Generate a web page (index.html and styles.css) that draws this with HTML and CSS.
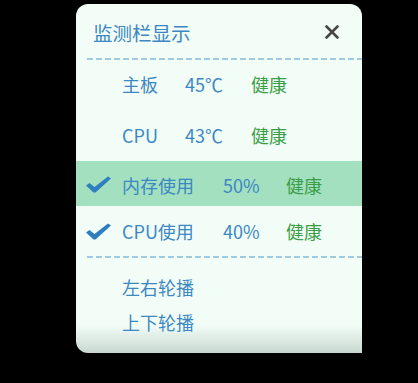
FILE: index.html
```html
<!DOCTYPE html>
<html lang="zh-CN">
<head>
<meta charset="UTF-8">
<title>监测栏显示</title>
<link rel="stylesheet" href="styles.css">
</head>
<body>

<div class="panel">
  <div class="header">
    <span class="title">监测栏显示</span>
    <svg class="close" width="14" height="14" viewBox="0 0 14 14">
      <path d="M1.5 1.5 L12.5 12.5 M12.5 1.5 L1.5 12.5" stroke="#474747" stroke-width="2.6" stroke-linecap="round"/>
    </svg>
  </div>
  <div class="dash"></div>

  <div class="row r1">
    <span class="check"></span>
    <span class="name w2">主板</span>
    <span class="val">45℃</span>
    <span class="ok">健康</span>
  </div>
  <div class="row r2">
    <span class="check"></span>
    <span class="name w2">CPU</span>
    <span class="val">43℃</span>
    <span class="ok">健康</span>
  </div>
  <div class="row r3 active">
    <span class="check"><svg width="25" height="17" viewBox="0 0 25 17"><path d="M0 9.5 L3.5 7 L8.5 11 L22 0.5 L25 2.5 L9.5 16.5 L7.5 16.5 Z" fill="#2f7fc0"/></svg></span>
    <span class="name w4">内存使用</span>
    <span class="val">50%</span>
    <span class="ok">健康</span>
  </div>
  <div class="row r4">
    <span class="check"><svg width="25" height="17" viewBox="0 0 25 17"><path d="M0 9.5 L3.5 7 L8.5 11 L22 0.5 L25 2.5 L9.5 16.5 L7.5 16.5 Z" fill="#2f7fc0"/></svg></span>
    <span class="name w4">CPU使用</span>
    <span class="val">40%</span>
    <span class="ok">健康</span>
  </div>
  <div class="dash"></div>

  <div class="modes">
    <div class="mode">左右轮播</div>
    <div class="mode">上下轮播</div>
  </div>
</div>

</body>
</html>
```

FILE: styles.css
```css
body {
  margin: 0;
  background: #000;
  font-family: "Noto Sans CJK SC", "Noto Sans", sans-serif;
}

.panel {
  margin: 4px 0 0 76px;
  width: 286px;
  height: 349px;
  border-radius: 12px 12px 0 12px;
  overflow: hidden;
  background: linear-gradient(to bottom, #f2fdf8 0, #f2fdf8 calc(100% - 28px), #c8d8d0 100%);
  color: #3d87c2;
}

.header {
  height: 54px;
  display: flex;
  align-items: center;
  justify-content: space-between;
  padding: 0 23px 0 17px;
}

.title {
  font-size: 19.5px;
  margin-top: 2px;
}

.close {
  margin-top: 2px;
}

.dash {
  height: 2px;
  margin-left: 11px;
  background: repeating-linear-gradient(to right, #9fcbe2 0, #9fcbe2 6px, transparent 6px, transparent 9px);
}

.row {
  display: flex;
  align-items: center;
  padding-left: 10px;
  font-size: 18px;
}

.r1 { height: 48px; }
.r2 { height: 53px; }
.r3 { height: 45px; padding-top: 2px; box-sizing: border-box; }
.r4 { height: 50px; }

.row.active {
  background: #a2e0c0;
}

.check {
  width: 36px;
  display: flex;
  align-items: center;
}

.name.w2 { width: 63px; }
.name.w4 { width: 101px; }

.val { width: 63px; }
.r1 .val, .r2 .val { width: 66px; }

.ok {
  color: #3b9e46;
}

.modes {
  padding: 12px 0 0 46px;
}

.mode {
  height: 35px;
  line-height: 35px;
  font-size: 18px;
}
```
